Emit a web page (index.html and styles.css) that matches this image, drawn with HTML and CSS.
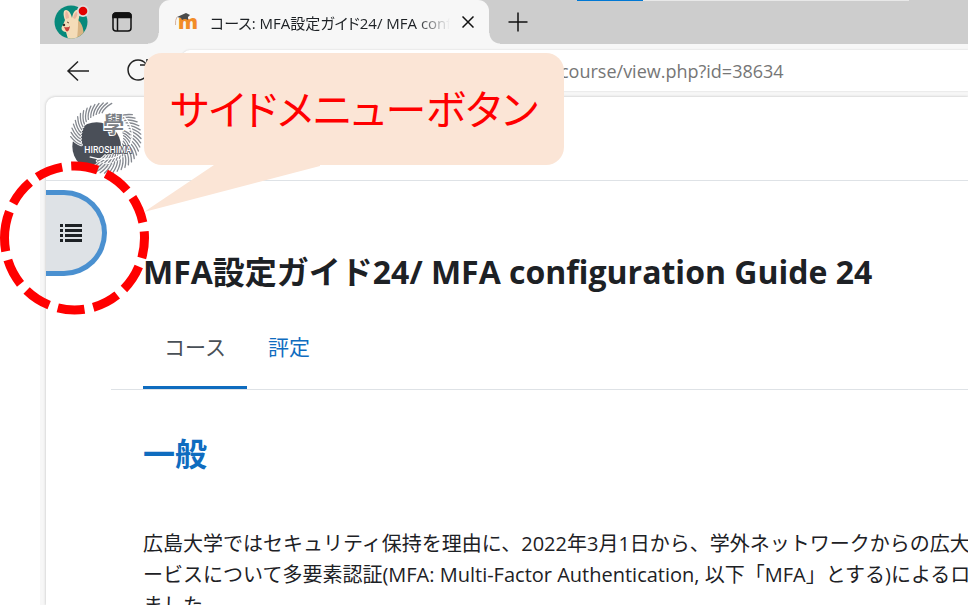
FILE: index.html
```html
<!DOCTYPE html>
<html lang="ja">
<head>
<meta charset="utf-8">
<title>コース: MFA設定ガイド24/ MFA configuration Guide 24</title>
<link rel="stylesheet" href="styles.css">
</head>
<body>
<div class="browser">
  <div class="tabstrip">
    <button class="profile" type="button" aria-label="プロファイル">
      <svg width="36" height="36" viewBox="0 0 36 36">
        <defs><clipPath id="face"><circle cx="17" cy="18" r="16.5"/></clipPath></defs>
        <circle cx="17" cy="18" r="16.5" fill="#07897b"/>
        <g clip-path="url(#face)">
          <path d="M20 14c7 2 10 9 10 21H16z" fill="#d8b483"/>
          <path d="M11 16C9 11 9 6 12 6c3 0 5 4 6 8 1-5 3-9 6-8 3 2 1 8 0 12 0 5 0 8-1 17H14l-2-7c-4 0-6-4-3-7z" fill="#f4dcb8"/>
          <path d="M12 7c2 1 3 4 3 7l-3 1c-1-3-1-6 0-8zm11 1c1 2 0 5-2 7l-2-1c1-3 2-6 4-6z" fill="#e9b6a0"/>
          <path d="M10 23q5 1 6-1-1 7-4 5z" fill="#c8443d"/>
          <circle cx="10" cy="21" r="1.2" fill="#3e2c26"/>
          <path d="M13 18l2 1" stroke="#6b4b35"/>
        </g>
        <circle cx="29" cy="7" r="6" fill="#dedede"/>
        <circle cx="29" cy="7" r="4.3" fill="#e20000"/>
      </svg>
    </button>
    <button class="actions" type="button" aria-label="タブ操作メニュー">
      <svg width="20" height="20" viewBox="0 0 20 20" fill="none" stroke="#111" stroke-width="1.5">
        <rect x="1" y="1" width="18" height="18" rx="3"/>
        <path d="M1 4a3 3 0 0 1 3-3h12a3 3 0 0 1 3 3v1.500H1z" fill="#111"/>
        <path d="M5.500 5v14"/>
      </svg>
    </button>
    <div class="tab">
      <svg class="favicon" width="24" height="20" viewBox="0 0 24 20">
        <text class="favicon-m" x="4" y="17">m</text>
        <path d="M3 5l9-4 4 2-2 2v3q-3-2-6 0l-1-2z" fill="#4b4b4b"/>
        <path d="M3 5Q1 8 1.500 13" fill="none" stroke="#d9b5a0"/>
      </svg>
      <span class="tab-title">コース: MFA設定ガイド24/ MFA conf</span>
      <button class="close" type="button" aria-label="タブを閉じる">
        <svg width="12" height="12" viewBox="0 0 12 12" stroke="#111" stroke-width="1.500"><path d="M.5.5l11 11M11.500.5l-11 11"/></svg>
      </button>
    </div>
    <button class="newtab" type="button" aria-label="新しいタブ">
      <svg width="20" height="20" viewBox="0 0 20 20" stroke="#111" stroke-width="1.500"><path d="M10 .5v19M.5 10h19"/></svg>
    </button>
    <div class="loading"><div class="loading-done"></div></div>
  </div>
  <div class="toolbar">
    <button class="tool" type="button" aria-label="戻る">
      <svg width="24" height="22" viewBox="0 0 24 22" fill="none" stroke="#222" stroke-width="1.500"><path d="M23 11H2M12 1.500L2 11l10 9.500"/></svg>
    </button>
    <button class="tool" type="button" aria-label="更新">
      <svg width="24" height="24" viewBox="0 0 24 24" fill="none" stroke="#222" stroke-width="1.500"><path d="M20 5a10 10 0 1 0 2 7M21 0v6h-7"/></svg>
    </button>
    <input class="address" type="text" aria-label="アドレス" value="course/view.php?id=38634">
  </div>
  <div class="page">
    <header class="site">
      <svg class="crest" width="75" height="72" viewBox="95 35 225 215">
        <circle cx="181" cy="168" r="73" fill="#4a4f58"/>
        <g id="feathers" fill="none" stroke-linecap="round"></g>
        <path d="M262 76Q306 125 276 172Q236 222 160 199" fill="none" stroke="#fff" stroke-width="4"/>
        <text class="crest-kanji" x="200" y="124">學</text>
        <text class="crest-name" x="144" y="187">HIROSHIMA</text>
      </svg>
    </header>
    <button class="drawer" type="button" aria-label="サイドメニュー">
      <svg width="22" height="18" viewBox="0 0 22 18" fill="#1d2125"><path d="M0 0h3v3H0zM5 0h17v3H5zM0 5h3v3H0zM5 5h17v3H5zM0 10h3v3H0zM5 10h17v3H5zM0 15h3v3H0zM5 15h17v3H5z"/></svg>
    </button>
    <main class="course">
      <h1>MFA設定ガイド24/ MFA configuration Guide 24</h1>
      <nav class="tabs">
        <a class="current" href="#course">コース</a>
        <a href="#grades">評定</a>
      </nav>
      <section id="course">
        <h2>一般</h2>
        <p>広島大学ではセキュリティ保持を理由に、2022年3月1日から、学外ネットワークからの広大<br>ービスについて多要素認証(MFA: Multi-Factor Authentication, 以下「MFA」とする)によるロ<br>ました</p>
      </section>
    </main>
  </div>
</div>
<svg class="ring" width="150" height="154" viewBox="0 0 150 154" fill="none" stroke="#f00" stroke-width="9">
  <path d="M4.500 77A70 72 0 0 1 144.500 77A70 72 0 0 1 4.500 77" stroke-dasharray="27 9"/>
</svg>
<div class="callout">
  サイドメニューボタン
  <svg class="tail" width="176" height="48" viewBox="0 0 176 48" fill="#fbe5d6"><path d="M70 0h106v1L0 47z"/></svg>
</div>
<script src="crest.js"></script>
</body>
</html>
```
FILE: styles.css
```css
* { box-sizing: border-box; }
body {
  margin: 0;
  height: 100vh;
  overflow: hidden;
  position: relative;
  background: #fff;
  color: #1d2125;
  font-family: "Open Sans", "Noto Sans CJK JP", sans-serif;
  font-size: 20px;
}
button {
  border: 0;
  padding: 0;
  background: none;
  font: inherit;
  display: flex;
  align-items: center;
  justify-content: center;
  flex: none;
}
.browser {
  margin-left: 40px;
  height: 100%;
  display: flex;
  flex-direction: column;
  background: #f7f7f7;
}
.tabstrip {
  display: flex;
  height: 44px;
  flex: none;
  background: #cdcdcd;
}
.profile { width: 60px; padding-left: 3px; }
.actions { width: 44px; }
.tab {
  position: relative;
  display: flex;
  align-items: center;
  width: 330px;
  flex: none;
  margin-left: 15px;
  padding: 0 15px;
  background: #f7f7f7;
  border-radius: 11px 11px 0 0;
}
.tab::before, .tab::after {
  content: "";
  position: absolute;
  bottom: 0;
  width: 11px;
  height: 11px;
}
.tab::before { right: 100%; background: radial-gradient(circle at 0 0, #cdcdcd 10px, #f7f7f7 11px); }
.tab::after { left: 100%; background: radial-gradient(circle at 100% 0, #cdcdcd 10px, #f7f7f7 11px); }
.favicon { flex: none; }
.favicon-m { font-size: 20px; font-weight: 800; fill: #f28c28; }
.tab-title {
  flex: 1;
  margin: 0 12px;
  overflow: hidden;
  white-space: nowrap;
  font-size: 15px;
  font-feature-settings: "palt";
  -webkit-mask-image: linear-gradient(to right, #000 86%, transparent);
  mask-image: linear-gradient(to right, #000 86%, transparent);
}
.newtab { width: 57px; }
.loading {
  width: 332px;
  height: 1px;
  margin-left: 31px;
  background: #e8e8e8;
}
.loading-done { width: 20%; height: 1px; background: #0078d4; }
.toolbar {
  display: flex;
  align-items: center;
  flex: none;
  height: 53px;
  padding-left: 26px;
}
.tool { width: 24px; margin-right: 36px; }
.tool + .tool { margin-right: 32px; }
.address {
  flex: 1;
  min-width: 0;
  height: 41px;
  border: 0;
  border-radius: 8px 0 0 8px;
  padding: 0 0 0 378px;
  background: #fff;
  box-shadow: 0 0 2px #ccc;
  color: #767676;
  font: inherit;
  font-size: 18px;
}
.page {
  position: relative;
  flex: 1;
  min-height: 0;
  overflow: hidden;
  margin-left: 6px;
  background: #fff;
  border-radius: 9px 0 0 0;
  box-shadow: 0 0 3px #bbb;
}
.site {
  height: 84px;
  padding: 5px 22px;
  border-bottom: 1px solid #dee2e6;
}
.crest-kanji { font-size: 64px; font-weight: 700; fill: #7b7f85; stroke: #fff; stroke-width: 6px; paint-order: stroke; }
.crest-name { font-family: "Liberation Sans Narrow", Roboto, sans-serif; font-size: 26px; font-weight: 500; fill: #fff; stroke: #4a4f58; stroke-width: 4px; paint-order: stroke; }
.drawer {
  position: absolute;
  top: 93px;
  left: 0;
  width: 61px;
  height: 86px;
  padding-right: 6px;
  border: 5px solid #4a90d0;
  border-left: 0;
  border-radius: 0 43px 43px 0;
  background: #dee2e6;
}
.course { padding: 71px 0 0 65px; }
h1, h2 { margin: 0 32px; font-size: 32px; line-height: 40px; font-weight: 700; white-space: nowrap; }
.tabs {
  display: flex;
  margin-top: 20px;
  padding-left: 32px;
  border-bottom: 1px solid #dee2e6;
}
.tabs a {
  padding: 20px 21px 24px;
  border-bottom: 3px solid transparent;
  font-size: 21px;
  line-height: 30px;
  color: #0f6cbf;
  text-decoration: none;
}
.tabs .current { color: #495057; border-color: #0f6cbf; }
h2 { margin-top: 44px; color: #0f6cbf; }
p { margin: 54px 0 0 32px; line-height: 31px; white-space: nowrap; }
.ring { position: absolute; left: 0; top: 161px; }
.callout {
  position: absolute;
  left: 144px;
  top: 53px;
  width: 420px;
  height: 112px;
  border-radius: 18px;
  background: #fbe5d6;
  color: #f00;
  font-size: 41px;
  line-height: 112px;
  text-align: center;
  white-space: nowrap;
  font-feature-settings: "palt";
}
.tail { position: absolute; left: 0; top: 100%; }
```
FILE: crest.js
```js
// Draws the phoenix feathers round the crest.
const group = document.getElementById("feathers");
function feather(angle, inner, outer, lean) {
  const point = (r, deg) => {
    const t = deg * Math.PI / 180;
    return (208 + r * Math.cos(t)).toFixed(1) + " " + (142 + r * Math.sin(t)).toFixed(1);
  };
  for (const [color, width] of [["#fff", 9], ["#858990", 4]]) {
    const path = document.createElementNS("http://www.w3.org/2000/svg", "path");
    path.setAttribute("d", "M" + point(inner, angle) + "Q" + point((inner + outer) / 2, angle + lean * 0.3) + " " + point(outer, angle + lean));
    path.setAttribute("stroke", color);
    path.setAttribute("stroke-width", width);
    group.appendChild(path);
  }
}
for (let a = 164; a <= 262; a += 7) feather(a, 76, 105, 18);
for (let a = 104; a >= -60; a -= 7) feather(a, 76, 106, 16);
for (let a = 92; a >= -30; a -= 9) feather(a, 54, 74, 18);
```
